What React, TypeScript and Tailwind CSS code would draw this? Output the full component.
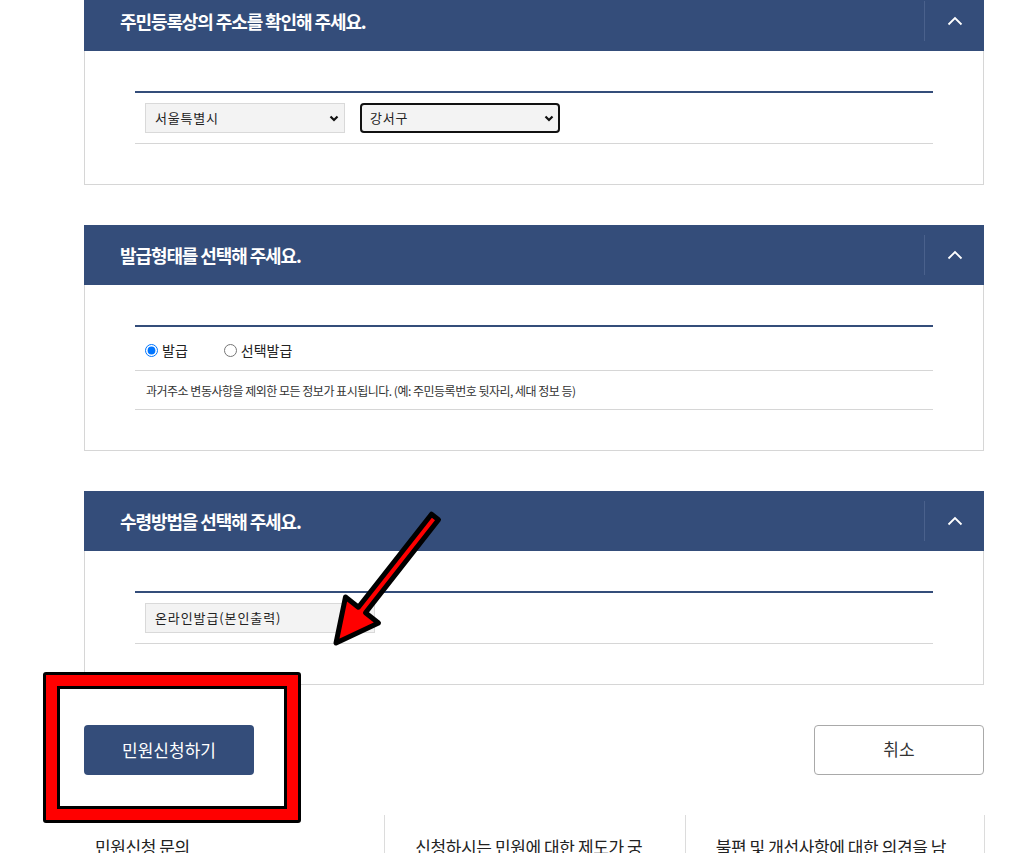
import { ReactNode } from 'react';

const font = { fontFamily: '"Noto Sans CJK KR", "Noto Sans", sans-serif' };

function ChevronUp() {
  return (
    <svg width="16" height="10" viewBox="0 0 16 10" fill="none">
      <polyline points="1.5,8.5 8,2 14.5,8.5" stroke="#ffffff" strokeWidth="1.8" />
    </svg>
  );
}

function ChevronDown() {
  return (
    <svg width="10" height="7" viewBox="0 0 10 7" fill="none">
      <polyline points="1.5,1.5 5,5 8.5,1.5" stroke="#111111" strokeWidth="2.2" />
    </svg>
  );
}

function Section({ title, children }: { title: string; children: ReactNode }) {
  return (
    <section className="w-[900px]">
      <div className="flex h-[60px] items-stretch bg-[#344d7a]">
        <h2 className="flex flex-1 items-center pl-[36px] text-[18px] font-bold tracking-[-1.1px] text-white">
          {title}
        </h2>
        <div className="my-[10px] w-px bg-[#4a618c]" />
        <button className="flex w-[59px] items-center justify-center">
          <ChevronUp />
        </button>
      </div>
      <div className="border-x border-b border-[#d6d6d6] bg-white px-[50px] pt-[40px] pb-[40px]">
        <div className="border-t-2 border-[#344d7a]">{children}</div>
      </div>
    </section>
  );
}

function FakeSelect({ label, focused }: { label: string; focused?: boolean }) {
  return (
    <div
      className={
        focused
          ? 'flex h-[30px] w-[200px] items-center justify-between rounded-[4px] border-2 border-[#111] bg-[#f3f3f3] pr-[4px] pl-[8px] text-[13px] text-[#222]'
          : 'flex h-[30px] w-[200px] items-center justify-between border border-[#d9d9d9] bg-[#f3f3f3] pr-[5px] pl-[9px] text-[13px] text-[#222]'
      }
    >
      <span className="tracking-[0.8px]">{label}</span>
      <ChevronDown />
    </div>
  );
}

export default function App() {
  return (
    <div className="relative w-[1022px] overflow-hidden bg-white" style={font}>
      <div className="-mt-[9px] flex flex-col gap-[40px] pl-[84px]">
        <Section title="주민등록상의 주소를 확인해 주세요.">
          <div className="flex items-center gap-[15px] border-b border-[#d6d6d6] px-[10px] py-[10px]">
            <FakeSelect label="서울특별시" />
            <FakeSelect label="강서구" focused />
          </div>
        </Section>

        <Section title="발급형태를 선택해 주세요.">
          <div className="flex h-[44px] items-center gap-[36px] border-b border-[#d6d6d6] px-[10px] pt-[3px] text-[14px] text-[#222]">
            <label className="flex items-center gap-[4px]">
              <input type="radio" name="issue" defaultChecked className="m-0 h-[13px] w-[13px]" />
              <span>발급</span>
            </label>
            <label className="flex items-center gap-[4px]">
              <input type="radio" name="issue" className="m-0 h-[13px] w-[13px]" />
              <span>선택발급</span>
            </label>
          </div>
          <div className="flex h-[39px] items-center border-b border-[#d6d6d6] px-[11px] pt-[1px] text-[12px] tracking-[-0.5px] text-[#333]">
            과거주소 변동사항을 제외한 모든 정보가 표시됩니다. (예: 주민등록번호 뒷자리, 세대 정보 등)
          </div>
        </Section>

        <Section title="수령방법을 선택해 주세요.">
          <div className="flex items-center border-b border-[#d6d6d6] px-[10px] py-[10px]">
            <div className="flex h-[30px] w-[230px] items-center border border-[#d9d9d9] bg-[#f3f3f3] pl-[9px] text-[13px] tracking-[0.9px] text-[#222]">
              온라인발급(본인출력)
            </div>
          </div>
        </Section>

        <div className="flex w-[900px] justify-between">
          <button className="h-[50px] w-[170px] rounded-[4px] bg-[#344d7a] text-[17px] text-white">
            민원신청하기
          </button>
          <button className="h-[50px] w-[170px] rounded-[4px] border border-[#a9a9a9] bg-white pb-[3px] text-[17px] text-[#333]">
            취소
          </button>
        </div>

        <div className="grid w-[901px] grid-cols-3 text-[17px] leading-[26px] tracking-[-0.4px] text-[#222]">
          <div className="h-[120px] pt-[19px] pl-[11px]">민원신청 문의</div>
          <div className="h-[120px] border-l border-[#dcdcdc] pt-[19px] pl-[30px]">
            신청하시는 민원에 대한 제도가 궁
            <br />
            금하신가요?
          </div>
          <div className="h-[120px] border-x border-[#dcdcdc] pt-[19px] pl-[30px]">
            불편 및 개선사항에 대한 의견을 남
            <br />
            겨주세요.
          </div>
        </div>
      </div>

      {/* annotation: highlight box */}
      <div className="pointer-events-none absolute top-[672px] left-[43px] h-[151px] w-[258px] rounded-[3px] border-[3px] border-black">
        <div className="h-full w-full border-[11px] border-[#ff0000]">
          <div className="h-full w-full border-[3px] border-black" />
        </div>
      </div>

      {/* annotation: arrow */}
      <svg
        className="pointer-events-none absolute top-0 left-0"
        width="1022"
        height="853"
        viewBox="0 0 1022 853"
      >
        <polygon
          points="438.5,519.8 365.5,612.8 378.5,623 336,643 345.5,597 358.4,607.2 431.5,514.2"
          fill="#ff0000"
          stroke="#000000"
          strokeWidth="5"
          strokeLinejoin="round"
        />
      </svg>
    </div>
  );
}
